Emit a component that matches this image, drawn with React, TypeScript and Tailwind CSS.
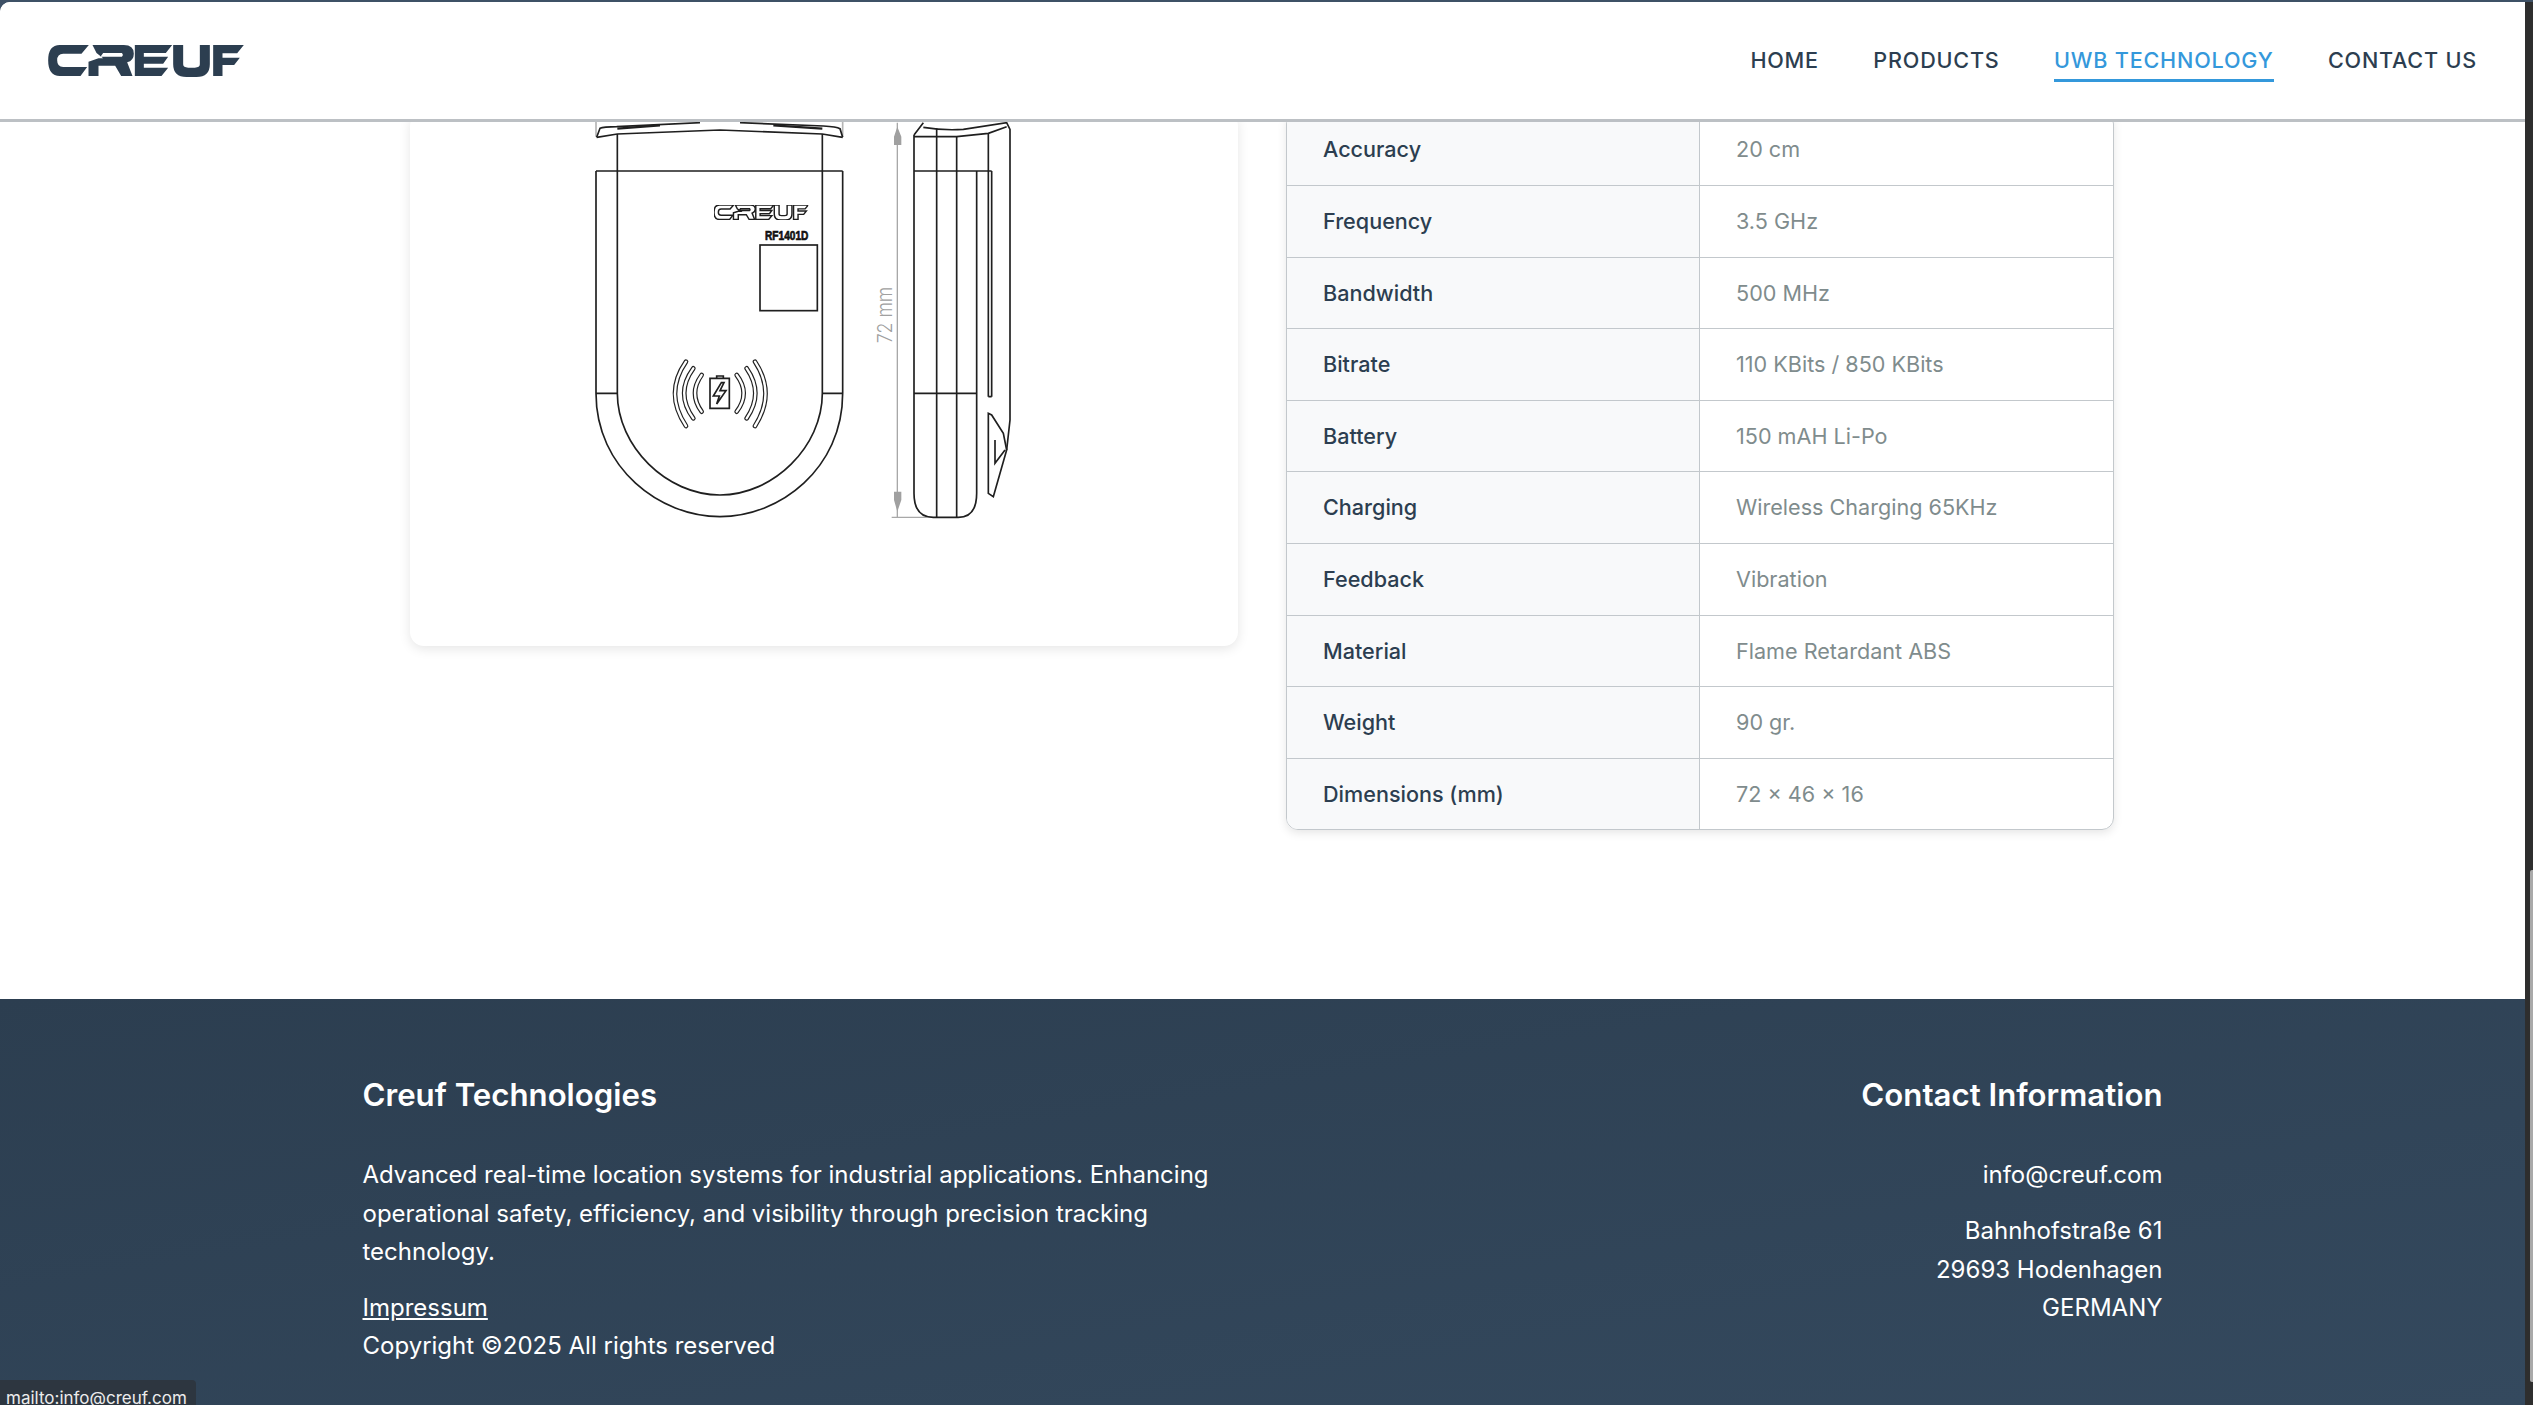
import * as React from "react";

const specs = [
  ["Accuracy", "20 cm"],
  ["Frequency", "3.5 GHz"],
  ["Bandwidth", "500 MHz"],
  ["Bitrate", "110 KBits / 850 KBits"],
  ["Battery", "150 mAH Li-Po"],
  ["Charging", "Wireless Charging 65KHz"],
  ["Feedback", "Vibration"],
  ["Material", "Flame Retardant ABS"],
  ["Weight", "90 gr."],
  ["Dimensions (mm)", "72 × 46 × 16"],
];

function LogoShapes() {
  return (
    <>
      <path d="M60 22H147L125 48H70Q52 48 52 68Q52 88 70 88H142L122 115H60Q25 115 25 68Q25 22 60 22Z" />
      <path
        fillRule="evenodd"
        d="M158 22H252Q282 22 282 48Q282 68 262 74L278 115H244L226 84H176V115H146V72L176 62H190L170 46ZM190 46L182 57H246Q252 52 246 46Z"
      />
      <path d="M285 22H397L378 46H312V57H385L370 78H312V90H385L365 115H285Z" />
      <path d="M400 22H430V80Q430 90 445 90H465Q480 90 480 80V22H510V80Q510 118 470 118H440Q400 118 400 80Z" />
      <path d="M520 22H612L592 47H548V60H600L583 82H548V115H520Z" />
    </>
  );
}

function Arc({ d }: { d: string }) {
  return (
    <>
      <path d={d} fill="none" stroke="#222" strokeWidth="14" strokeLinecap="round" />
      <path d={d} fill="none" stroke="#fff" strokeWidth="7" strokeLinecap="round" />
    </>
  );
}

function Drawing() {
  return (
    <svg viewBox="0 33 1440 1230" className="block h-[410px] w-[480px]">
      <g fill="none" stroke="#1f1f1f" strokeWidth="5">
        {/* front view */}
        <path d="M108 35V80M848 35V80" stroke="#b5b5b5" />
        <path d="M108 183V850C108 1075 300 1220 480 1220C660 1220 848 1075 848 850V183" />
        <path d="M172 72V850C172 1010 320 1155 480 1155C640 1155 787 1010 787 850V72" />
        <path d="M108 183H848M108 850H172M787 850H848" />
        <path d="M110 82L120 55Q130 50 170 50L420 38M540 38L790 48Q830 50 840 56L848 82" />
        <path d="M110 82L172 72L480 60L787 72L848 82" />
        <path d="M172 56L300 46M640 46L787 56" strokeWidth="7" />
        <rect x="600" y="405" width="172" height="197" />
        <path d="M470 805V798H490V805M450 805H508V895H450Z" />
        <path d="M484 818L460 858H478L470 882L498 842H480L492 818Z" />
      </g>
      <svg x="462" y="285" width="283" height="45" viewBox="25 22 587 96" preserveAspectRatio="none">
        <g fill="#fff" stroke="#1f1f1f" strokeWidth="9">
          <LogoShapes />
        </g>
      </svg>
      <text
        x="615"
        y="391"
        fontSize="38"
        fontWeight="700"
        textLength="130"
        lengthAdjust="spacingAndGlyphs"
        fontFamily="Liberation Sans, sans-serif"
        fill="#111"
        stroke="#111"
        strokeWidth="2"
      >
        RF1401D
      </text>
      <Arc d="M425 795Q385 850 425 905" />
      <Arc d="M400 775Q345 850 400 925" />
      <Arc d="M378 755Q312 850 378 948" />
      <Arc d="M530 795Q572 850 530 905" />
      <Arc d="M560 775Q612 850 560 925" />
      <Arc d="M585 755Q648 850 585 948" />

      {/* dimension */}
      <g fill="none" stroke="#a8a8a8" strokeWidth="4">
        <path d="M1012 38V1220M995 1222H1100" />
      </g>
      <path d="M1012 50L1002 80V105H1024V80ZM1012 1205L1002 1170V1145H1024V1170Z" fill="#a0a0a0" />
      <text
        x="997"
        y="615"
        fontSize="62"
        fontWeight="300"
        textAnchor="middle"
        textLength="170"
        lengthAdjust="spacingAndGlyphs"
        fontFamily="Inter, sans-serif"
        fill="#a0a0a0"
        transform="rotate(-90 997 615)"
      >
        72 mm
      </text>

      {/* side view */}
      <g fill="none" stroke="#1f1f1f" strokeWidth="5">
        <path d="M1062 75V1150Q1062 1222 1120 1222H1195Q1250 1222 1250 1150V183" />
        <path d="M1130 55V1222M1190 80V1222M1062 183H1295M1062 850H1250" />
        <path d="M1062 75L1090 38M1062 80H1190L1285 70L1340 50" />
        <path d="M1090 52Q1150 62 1210 58L1340 38L1350 58V930L1340 1020" />
        <path d="M1285 70V860M1295 183V860M1285 860H1295" />
        <path d="M1285 910V1150L1300 1160L1340 1020L1330 970L1295 915ZM1305 990V1060L1335 1020" />
      </g>
    </svg>
  );
}

export default function App() {
  return (
    <div className="relative flex h-screen flex-col overflow-hidden bg-[#3e5166] pt-[2px] font-[Inter,sans-serif]">
      <div className="flex min-h-0 flex-1">
        <div className="flex min-w-0 flex-1 flex-col overflow-hidden rounded-tl-[10px] bg-white">
          <header className="flex h-[120px] shrink-0 items-center justify-between border-b-[3px] border-[#bcc0c4] bg-white pr-[48px] pl-[48px]">
            <svg viewBox="25 22 587 96" className="h-[32px] w-[196px] fill-[#2c3e50]">
              <LogoShapes />
            </svg>
            <nav className="flex items-center gap-[54.4px] text-[21.6px] font-medium tracking-[0.8px] text-[#2c3e50]">
              <a className="pt-[5px] pb-[6px]">HOME</a>
              <a className="pt-[5px] pb-[6px]">PRODUCTS</a>
              <a className="border-b-[3px] border-[#3498db] pt-[5px] pb-[3px] text-[#3498db]">UWB TECHNOLOGY</a>
              <a className="pt-[5px] pb-[6px]">CONTACT US</a>
            </nav>
          </header>

          <main className="h-[877px] shrink-0 overflow-hidden pl-[409.5px]">
            <div className="-mt-[9.6px] grid w-[1704px] grid-cols-2 items-start gap-[48px]">
              <div className="h-[533.6px] rounded-[14px] bg-white pt-[8.6px] pl-[150.5px] shadow-[0_3px_12px_rgba(0,0,0,0.1)]">
                <Drawing />
              </div>
              <div className="overflow-hidden rounded-[12px] border border-[#c3c8cc] text-[21.6px] shadow-[0_3px_10px_rgba(0,0,0,0.1)]">
                {specs.map(([label, value], i) => (
                  <div
                    key={label}
                    className={`grid h-[71.6px] grid-cols-2 ${i > 0 ? "border-t border-[#c3c8cc]" : ""}`}
                  >
                    <div className="flex items-center border-r border-[#c3c8cc] bg-[#f8f9fa] pl-[36.5px] font-medium text-[#2c3e50]">
                      {label}
                    </div>
                    <div className="flex items-center pl-[36.5px] text-[#7f8c8d]">{value}</div>
                  </div>
                ))}
              </div>
            </div>
          </main>

          <footer className="min-h-0 flex-1 bg-gradient-to-br from-[#2c3e50] to-[#34495e] pt-[76.8px] text-[24px] leading-[38.4px] text-white">
            <div className="mx-auto flex w-[1800px] justify-between">
              <div className="w-[900px]">
                <h3 className="mb-[42px] text-[31.2px] font-semibold">Creuf Technologies</h3>
                <p className="mb-[17.6px]">
                  Advanced real-time location systems for industrial applications. Enhancing operational safety,
                  efficiency, and visibility through precision tracking technology.
                </p>
                <p>
                  <a className="underline">Impressum</a>
                  <br />
                  Copyright ©2025 All rights reserved
                </p>
              </div>
              <div className="text-right">
                <h3 className="mb-[42px] text-[31.2px] font-semibold">Contact Information</h3>
                <p className="mb-[17.6px]">info@creuf.com</p>
                <p>
                  Bahnhofstraße 61
                  <br />
                  29693 Hodenhagen
                  <br />
                  GERMANY
                </p>
              </div>
            </div>
          </footer>
        </div>

        {/* browser scrollbar */}
        <div className="flex w-[8px] shrink-0 flex-col bg-[#2e2e2e] pt-[868px] pb-[23px] pl-[5px]">
          <div className="flex-1 rounded-l-[2px] bg-[#a9a9a9]" />
        </div>
      </div>

      <div className="absolute bottom-0 left-0 h-[25px] w-[196px] overflow-hidden rounded-tr-[4px] bg-[#2d3640] pl-[6px] text-[17px] leading-[36px] text-[#ececec]">
        mailto:info@creuf.com
      </div>
    </div>
  );
}
